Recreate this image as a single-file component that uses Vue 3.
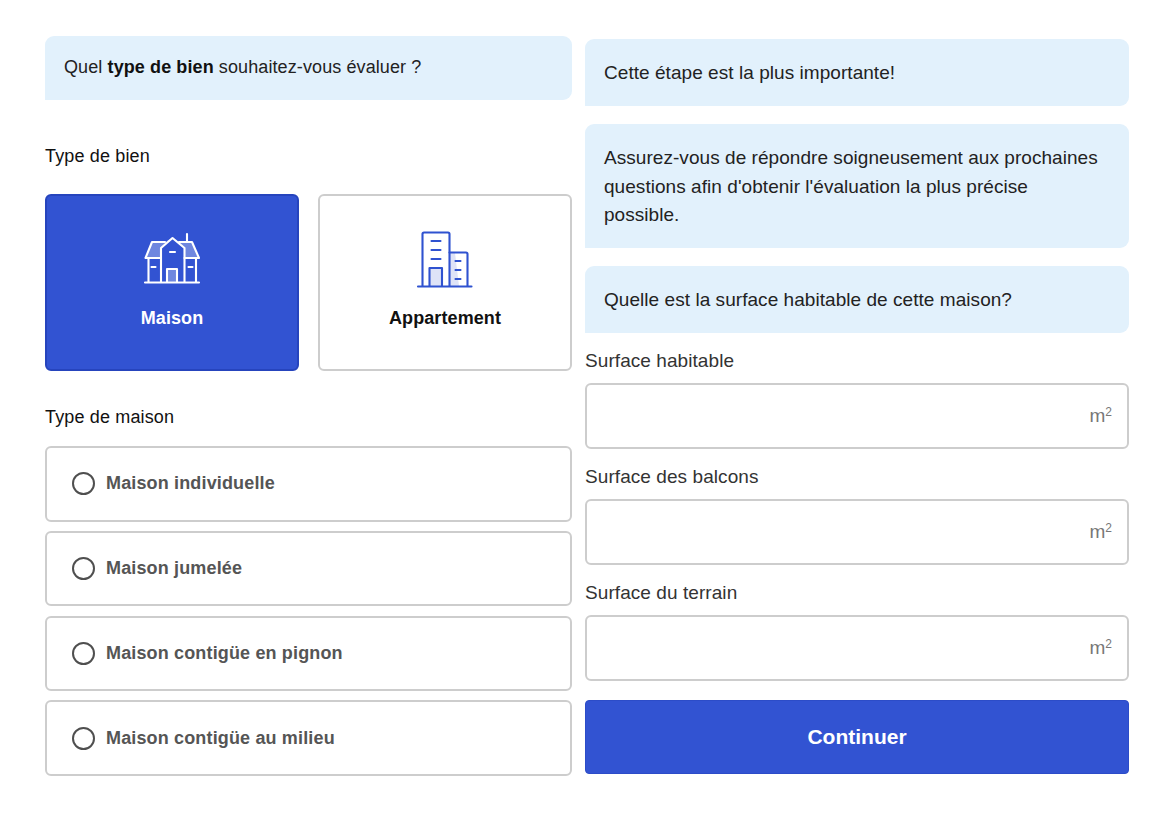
<template>
  <main class="page">
    <section class="col left">
      <div class="bubble first">Quel <b>type de bien</b> souhaitez-vous évaluer ?</div>
      <div class="label type-label">Type de bien</div>
      <div class="cards">
        <button class="card active">
          <svg class="icon" width="60" height="60" viewBox="142 230 60 60" fill="none" stroke="#fff" stroke-width="2.100" stroke-linecap="round" stroke-linejoin="round">
            <path d="M146 258L152 242H165L172 238L179 242H192L198 258H184V248L172 238L161 248V258Z" fill="#fff" fill-opacity=".3" stroke="none" />
            <path d="M167 269H177V282H167Z" fill="#fff" fill-opacity=".3" stroke="none" />
            <path d="M145.500 258L152 242H165M179 242H192L199 258H184.500M145.500 258H161M187 234V242" />
            <path d="M161 282V248L172.500 238L184.500 248V282" />
            <path d="M148.500 258V282M196 258V282M145 282.500H199" />
            <path d="M167 282V269H177V282" />
            <path d="M170 252H175M151.500 267H155.500M188.500 267H192.500" />
          </svg>
          <span>Maison</span>
        </button>
        <button class="card">
          <svg class="icon" width="60" height="60" viewBox="415 230 60 60" fill="none" stroke="#2f52d0" stroke-width="2.100" stroke-linecap="round" stroke-linejoin="round">
            <path d="M450 253H455L459 286H450Z" fill="#2f52d0" fill-opacity=".16" stroke="none" />
            <path d="M430 268H442V286H430Z" fill="#2f52d0" fill-opacity=".16" stroke="none" />
            <path d="M422.500 286V234Q422.500 232.500 424 232.500H448Q449.500 232.500 449.500 234V286" />
            <path d="M449.500 252.500H466Q467.500 252.500 467.500 254V286" />
            <path d="M418 286.500H471.500" />
            <path d="M429.500 286V268H442V286" />
            <path d="M431.500 241H440.500M431.500 250H440.500M431.500 259H440.500M455.500 261H460.500M455.500 270H460.500M455.500 279H460.500" />
          </svg>
          <span>Appartement</span>
        </button>
      </div>
      <div class="label home-label">Type de maison</div>
      <div class="options">
        <label v-for="o in options" :key="o" class="option">
          <span class="radio"></span>
          <span>{{ o }}</span>
        </label>
      </div>
    </section>
    <section class="col right">
      <div class="bubble">Cette étape est la plus importante!</div>
      <div class="bubble">Assurez-vous de répondre soigneusement aux prochaines questions afin d'obtenir l'évaluation la plus précise possible.</div>
      <div class="bubble">Quelle est la surface habitable de cette maison?</div>
      <div class="fields">
        <div v-for="f in fields" :key="f" class="field">
          <div class="field-label">{{ f }}</div>
          <div class="input"><span>m<sup>2</sup></span></div>
        </div>
      </div>
      <button class="continue">Continuer</button>
    </section>
  </main>
</template>

<script setup>
const options = ['Maison individuelle', 'Maison jumelée', 'Maison contigüe en pignon', 'Maison contigüe au milieu']
const fields = ['Surface habitable', 'Surface des balcons', 'Surface du terrain']
</script>

<style>
body { background: #fff; }
</style>

<style scoped>
.page {
  display: flex;
  gap: 13px;
  padding: 36px 29px 0 45px;
  font-family: "Liberation Sans", Arial, sans-serif;
  color: #222;
  box-sizing: border-box;
  width: 1158px;
  height: 819px;
  overflow: hidden;
}
.col { display: flex; flex-direction: column; }
.left { width: 527px; }
.right { width: 544px; padding-top: 3px; }
.bubble {
  background: #e2f1fc;
  border-radius: 9px 9px 9px 0;
  padding: 20px 24px 18.500px 19px;
  font-size: 19px;
  letter-spacing: .05px;
  line-height: 28.500px;
  box-sizing: border-box;
}
.bubble + .bubble { margin-top: 18px; }
.bubble.first {
  height: 64px;
  padding: 17px 18px 17px 19px;
  font-size: 18px;
  letter-spacing: .1px;
  line-height: 28px;
}
.bubble b { color: #111; }
.label { font-size: 18px; letter-spacing: .15px; line-height: 24px; color: #111; }
.type-label { margin-top: 44px; }
.cards { display: flex; gap: 19px; margin-top: 26px; }
.card {
  flex: 1;
  height: 177px;
  border: 2px solid #cdcdcd;
  border-radius: 6px;
  background: #fff;
  display: flex;
  flex-direction: column;
  align-items: center;
  padding: 34px 0 0;
  font: bold 18px/24px "Liberation Sans", Arial, sans-serif;
  letter-spacing: .1px;
  color: #111;
  box-sizing: border-box;
}
.card .icon { margin-bottom: 16px; }
.card.active { background: #3253d2; border-color: #2644bd; color: #fff; }
.home-label { margin-top: 34px; }
.options { display: flex; flex-direction: column; gap: 9.330px; margin-top: 17px; }
.option {
  height: 75.500px;
  border: 2px solid #cdcdcd;
  border-radius: 6px;
  display: flex;
  align-items: center;
  gap: 11px;
  padding-left: 25px;
  font-weight: bold;
  font-size: 18px;
  letter-spacing: .15px;
  color: #555;
  box-sizing: border-box;
}
.radio {
  width: 23px;
  height: 23px;
  border: 2px solid #4f4f4f;
  border-radius: 50%;
  box-sizing: border-box;
}
.fields { display: flex; flex-direction: column; gap: 16px; margin-top: 16px; }
.field-label { font-size: 19px; letter-spacing: .07px; line-height: 24px; color: #333; margin-bottom: 10px; }
.input {
  height: 66px;
  border: 2px solid #cdcdcd;
  border-radius: 6px;
  display: flex;
  align-items: center;
  justify-content: flex-end;
  padding-right: 15px;
  font-size: 19px;
  color: #777;
  box-sizing: border-box;
}
.input sup { font-size: 12px; line-height: 0; vertical-align: 6px; }
.continue {
  margin-top: 19px;
  height: 74px;
  border: 1px solid #2c4cc8;
  border-radius: 4px;
  background: #3253d2;
  color: #fff;
  font: bold 21px "Liberation Sans", Arial, sans-serif;
}
</style>
